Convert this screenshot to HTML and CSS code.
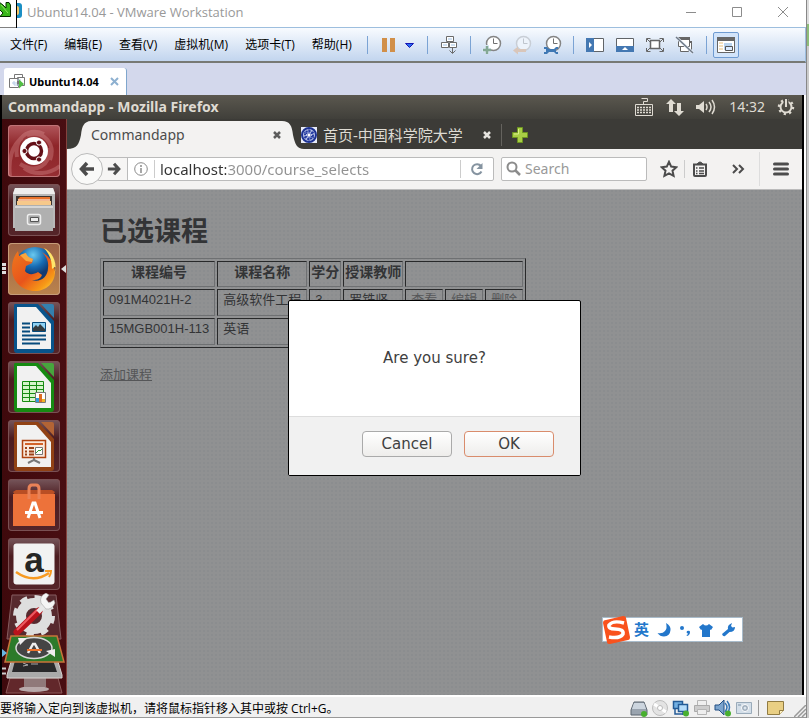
FILE: index.html
```html
<!DOCTYPE html>
<html lang="zh-CN">
<head>
<meta charset="utf-8">
<title>Ubuntu14.04 - VMware Workstation</title>
<link rel="stylesheet" href="styles.css">
</head>
<body>
<div class="window">
  <header class="titlebar">
    <svg class="app-icon" width="24" height="28" viewBox="0 0 24 28" aria-hidden="true">
      <rect x="13" y="3" width="9" height="15" rx="3" fill="#1b8fc4"/><rect x="15" y="6" width="4" height="9" rx="2" fill="#f3c766"/>
      <path d="M-1-1H16.500V28H-1z" fill="#fff" stroke="#000"/>
      <path d="M-1 2L3 5L6 8V2.500H9L10.500 5V16.500H0L3 13L-1 9z" fill="#3ab71b" stroke="#062c00"/><path d="M1 5L8 13" stroke="#8be35a"/>
    </svg>
    <h1 class="window-title">Ubuntu14.04 - VMware Workstation</h1>
    <div class="window-controls">
      <button type="button" aria-label="最小化"><svg width="12" height="12" viewBox="0 0 12 12"><path d="M1 6.500H11" stroke="#8c8c8c"/></svg></button>
      <button type="button" aria-label="最大化"><svg width="12" height="12" viewBox="0 0 12 12"><path d="M1.500 1.500H10.500V10.500H1.500z" fill="none" stroke="#8c8c8c"/></svg></button>
      <button type="button" aria-label="关闭"><svg width="12" height="12" viewBox="0 0 12 12"><path d="M1 1L11 11M11 1L1 11" stroke="#8c8c8c"/></svg></button>
    </div>
  </header>

  <div class="menubar">
    <nav class="menus">
      <button type="button">文件(F)</button><button type="button">编辑(E)</button><button type="button">查看(V)</button><button type="button">虚拟机(M)</button><button type="button">选项卡(T)</button><button type="button">帮助(H)</button>
    </nav>
    <span class="sep"></span>
    <button type="button" class="pause" aria-label="暂停"><svg width="34" height="16" viewBox="381 36 34 16"><path d="M382 37h5v14h-5zM390 37h5v14h-5z" fill="#d18f49"/><path d="M405.500 42.500h8l-4 4z" fill="#2a6cf0" stroke="#1515b5"/></svg></button>
    <span class="sep"></span>
    <button type="button" class="tool" aria-label="发送按键"><svg width="20" height="20" viewBox="438 34 20 20" fill="#fff" stroke="#6b6b6b"><path d="M445.500 35.500h7v5h-7zM440.500 41.500h7v5h-7zM448.500 41.500h7v5h-7z"/><path d="M447 38h4M442 44h4M450 44h4" stroke="#9dc0e4"/><path d="M451.500 47v5M448.500 49.500l3 3 3-3" fill="none"/></svg></button>
    <span class="sep"></span>
    <button type="button" class="tool" aria-label="拍摄快照"><svg width="20" height="20" viewBox="481 34 20 20"><circle cx="492.500" cy="42.500" r="7" fill="#fff" stroke="#858585" stroke-width="1.500"/><path d="M492.500 37.500v5h4" fill="none" stroke="#707070"/><path d="M481 49h9M486 44v9" stroke="#dce8f7" stroke-width="4"/><path d="M482 49h8M486 45v8" stroke="#83a894" stroke-width="2.500"/></svg></button>
    <button type="button" class="tool" aria-label="恢复快照"><svg width="20" height="20" viewBox="511 34 20 20"><circle cx="522.500" cy="42.500" r="7" fill="#edf3fb" stroke="#c8ced6" stroke-width="1.500"/><path d="M522.500 37.500v5h4" fill="none" stroke="#bfc5cd"/><path d="M512 49.500l5-4v2.500h8v3h-8v2.500z" fill="#d9c6ba"/></svg></button>
    <button type="button" class="tool" aria-label="管理快照"><svg width="20" height="20" viewBox="541 34 20 20"><circle cx="552.500" cy="42.500" r="7" fill="#fff" stroke="#858585" stroke-width="1.500"/><path d="M552.500 37.500v5h4" fill="none" stroke="#707070"/><path d="M543 46h3l2 2h5l2-2h2v2h-2v3h2v2h-2l-2-2h-5l-2 2h-3v-2h2v-3h-2z" fill="#3f78b4"/></svg></button>
    <span class="sep"></span>
    <button type="button" class="tool" aria-label="显示库"><svg width="20" height="20" viewBox="584 34 20 20"><path d="M585.500 37.500h17v13h-17z" fill="#fff" stroke="#606468"/><path d="M585 37h8v14h-8z" fill="#4478b2"/><path d="M588 41v6l3-3z" fill="#fff"/></svg></button>
    <button type="button" class="tool" aria-label="缩略图栏"><svg width="20" height="20" viewBox="614 34 20 20"><path d="M615.500 37.500h17v13h-17z" fill="#fff" stroke="#606468"/><path d="M615 45h18v6h-18z" fill="#4478b2"/><path d="M621 49h6l-3-3z" fill="#fff"/></svg></button>
    <button type="button" class="tool" aria-label="全屏"><svg width="20" height="20" viewBox="644 34 20 20" fill="none" stroke="#666"><path d="M649.500 39.500h9v8h-9z" fill="#fff" stroke-width="1.500"/><path d="M645.500 41v-3.500h4M658.500 37.500h4V41M645.500 47v3.500h4M658.500 50.500h4V47M646 38l3 3M662 38l-3 3M646 50l3-3M662 50l-3-3"/></svg></button>
    <button type="button" class="tool" aria-label="Unity 模式"><svg width="20" height="20" viewBox="674 34 20 20" fill="#fff" stroke="#666"><path d="M684.500 40.500h6v8h-6z"/><path d="M684 41h7" stroke-width="2"/><path d="M679.500 45.500h8v5h-8z"/><path d="M677.500 36.500h11v9h-11z"/><path d="M677 37.500h12" stroke-width="3"/><path d="M675 36l17 16" stroke="#e6effa" stroke-width="3"/><path d="M675 36l17 16" stroke="#707a86" stroke-width="1.500"/></svg></button>
    <span class="sep"></span>
    <button type="button" class="tool active" aria-label="控制台视图"><svg width="20" height="18" viewBox="717 35 20 18"><path d="M718.500 37.500h17v14h-17z" fill="#fff" stroke="#666"/><path d="M718 36h18v4h-18z" fill="#666"/><path d="M720 42h4M720 45h4M720 48h4" stroke="#e8c07a"/><path d="M725 42h8v7h-8z" fill="#bad4ef"/><path d="M726.500 45.500h7v4h-7z" fill="#d9eaff" stroke="#555"/></svg></button>
  </div>

  <div class="vmtabs">
    <div class="vmtab">
      <svg width="17" height="17" viewBox="9 74 17 17" fill="#fff" stroke="#777"><path d="M14.500 75.500h8v8h-8z"/><path d="M17.500 78.500h7v8h-7zM9.500 79.500h9v9h-9z"/><path d="M12 84h5M14 82v4h6M17 81h4" stroke="#b5cbe6" fill="none"/><path d="M19 80.500v9l5-4.500z" fill="#53bf45" stroke="none"/></svg>
      <span class="vmtab-name">Ubuntu14.04</span>
      <button type="button" aria-label="关闭标签"><svg width="9" height="9" viewBox="0 0 9 9"><path d="M1 1L8 8M8 1L1 8" stroke="#8db0d0" stroke-width="2"/></svg></button>
    </div>
  </div>

  <div class="vm">
    <div class="panel">
      <span class="panel-title">Commandapp - Mozilla Firefox</span>
      <div class="indicators">
        <svg width="20" height="20" viewBox="632 97 20 20" fill="none" stroke="#dfdbd2"><path d="M633.500 104.500h17v11h-17z"/><path d="M641.500 104v-2.500h4v-3h-6" /><path d="M635 107.500h14M635 110h14M635 112.500h14" stroke-dasharray="2 1" stroke-width="1.500"/></svg>
        <svg width="18" height="18" viewBox="666 98 18 18" fill="#dfdbd2"><path d="M671 99l5 5h-3v8h-4v-8h-3zM679 116l-5-5h3v-8h4v8h3z"/></svg>
        <svg width="21" height="18" viewBox="697 98 21 18" fill="none" stroke="#dfdbd2" stroke-width="1.500"><path d="M697 105h3l5-4v12l-5-4h-3z" fill="#dfdbd2" stroke="none"/><path d="M707 104q2 3 0 6M710 102q4 5 0 10M713 100q5 7 0 14"/></svg>
        <time>14:32</time>
        <svg width="18" height="18" viewBox="777 98 18 18" fill="none" stroke="#dfdbd2"><circle cx="786" cy="107" r="5.500" stroke-width="2"/><circle cx="786" cy="107" r="7" stroke-width="2.500" stroke-dasharray="2.200 3.300"/><path d="M786 97v10" stroke="#504e48" stroke-width="5"/><path d="M786 99v8" stroke-width="2"/></svg>
      </div>
    </div>

    <div class="desktop">
      <aside class="launcher">
        <button type="button" class="tile dash" aria-label="搜索"><svg width="52" height="52" viewBox="8 125 52 52"><path d="M17 157C14 138 28 127 44 134M27 135C44 130 56 144 50 160M50 148C50 166 36 174 20 164M10 176C8 160 12 145 22 138M24 168C34 176 50 174 60 166" fill="none" stroke="#e9a6a6" stroke-opacity=".3" stroke-width="4"/><circle cx="34" cy="151" r="14" fill="#fff"/><circle cx="34" cy="151" r="7.500" fill="none" stroke="#641018" stroke-width="3.500"/><g fill="#641018" stroke="#fff"><circle cx="24.500" cy="151" r="2.600"/><circle cx="39" cy="142.500" r="2.600"/><circle cx="39" cy="159.500" r="2.600"/></g></svg></button>
        <button type="button" class="tile" aria-label="文件"><svg width="52" height="52" viewBox="8 184 52 52"><path d="M15 188h38l2 5v35H13v-35z" fill="#b8b8b8"/><path d="M15 188h38l2 6H13z" fill="#eee"/><path d="M16 196h36v9H16z" fill="#3a3330"/><path d="M18 199l2-2h30v8H18z" fill="#e8722b"/><path d="M17 201h34v4H17z" fill="#f7c98b"/><path d="M18 200h32" stroke="#fff"/><path d="M15 205h38v26H15z" fill="#b0b0b0"/><path d="M15 206h38v2H15z" fill="#d6d6d6"/><rect x="27.500" y="214.500" width="13" height="10" rx="2" fill="#aaa" stroke="#eee" stroke-width="1.500"/><path d="M30.500 217.500h8v4h-8z" fill="#eee" stroke="#555"/></svg></button>
        <button type="button" class="tile firefox running" aria-label="Firefox"><svg width="52" height="52" viewBox="8 243 52 52"><defs><radialGradient id="globe" cx=".45" cy=".2"><stop stop-color="#69c9ef"/><stop offset=".6" stop-color="#166ab2"/><stop offset="1" stop-color="#123a70"/></radialGradient><linearGradient id="fox" x2="1" y2="1"><stop stop-color="#ee781d"/><stop offset=".5" stop-color="#e8541b"/><stop offset=".8" stop-color="#f79a17"/><stop offset="1" stop-color="#ffe14a"/></linearGradient></defs><circle cx="35" cy="267" r="20" fill="url(#globe)"/><path d="M35 291c-13 0-23-10-23-22c0-8 2-13 6-18l1 5l6-3c1 4 3 5 8 6l-1 4l-6 3l-1 5c3 4 8 4 13 1l4 3c-2 5-7 5-10 5c8 3 16-3 16-12c1-7-2-12-6-16c9 6 13 13 13 20c0 11-9 19-20 19z" fill="url(#fox)"/><path d="M44 248c10 5 14 17 10 27l2-9l-4 3c0-8-2-14-8-21z" fill="#ffe56a"/><path d="M20 255l6-2q1 4 7 6l-1 3l-6-1z" fill="#f9a63e"/></svg></button>
        <button type="button" class="tile" aria-label="Writer"><svg width="52" height="52" viewBox="8 302 52 52"><path d="M15 304h23l16 17v29q0 3-3 3H17q-3 0-3-3v-44q0-2 1-2z" fill="#08548c"/><path d="M41 304h11q2 0 2 2v12z" fill="#347fae"/><path d="M17 307h19l15 17v25H17z" fill="#f1f1f1"/><path d="M22 323.500h8M22 327.500h8M22 331.500h8M22 335.500h24M22 339.500h24M22 343.500h18" stroke="#064b7d" stroke-width="2"/><path d="M32.500 322.500h13v9h-13z" fill="#8ed2f4" stroke="#064b7d"/><path d="M33 331v-3l3-3 2 2 2-3 5 5v2z" fill="#353c40"/></svg></button>
        <button type="button" class="tile" aria-label="Calc"><svg width="52" height="52" viewBox="8 361 52 52"><path d="M15 363h23l16 17v29q0 3-3 3H17q-3 0-3-3v-44q0-2 1-2z" fill="#168b12"/><path d="M41 363h11q2 0 2 2v12z" fill="#47a53d"/><path d="M17 366h19l15 17v25H17z" fill="#f1f1f1"/><path d="M22.500 381.500h21v20h-21zM22 385.500h22M22 389.500h22M22 393.500h22M22 397.500h22M29.500 381v21M36.500 381v21" fill="#d6f5cb" stroke="#168b12"/><path d="M35.500 392.500h10v10h-10z" fill="#fff" stroke="#777"/><path d="M36 398h3v4h-3z" fill="#2e9cdf"/><path d="M39 394h3v8h-3z" fill="#de6c23"/><path d="M42 399h3v3h-3z" fill="#eeb325"/></svg></button>
        <button type="button" class="tile" aria-label="Impress"><svg width="52" height="52" viewBox="8 420 52 52"><path d="M15 422h23l16 17v29q0 3-3 3H17q-3 0-3-3v-44q0-2 1-2z" fill="#914215"/><path d="M41 422h11q2 0 2 2v12z" fill="#b36435"/><path d="M17 425h19l15 17v25H17z" fill="#f1f1f1"/><path d="M22.500 440.500h23v17h-23z" fill="#fae8db" stroke="#af4310" stroke-width="1.500"/><path d="M25 444h18" stroke="#d2622a" stroke-width="2"/><path d="M25 448h2M25 451.500h2M25 454.500h2M29 448h5M29 451.500h5M29 454.500h5" stroke="#9c4218" stroke-width="2"/><path d="M35.500 447.500h7v7h-7z" fill="#fff" stroke="#777"/><path d="M36 453l3-3 1 1 2-2" fill="none" stroke="#339d33"/><path d="M34 458v2l-6 3M34 460l6 3" fill="none" stroke="#777" stroke-width="2"/></svg></button>
        <button type="button" class="tile" aria-label="软件中心"><svg width="52" height="52" viewBox="8 479 52 52"><path d="M13 492l3-2h36l3 2-2 3H15z" fill="#b94e24"/><path d="M13 494h42v32H13z" fill="#ed723a"/><path d="M29 499v-10q0-4 3-4h4q3 0 3 4v10" fill="none" stroke="#e98257" stroke-width="3"/><path d="M28 518l5-15h2l5 15" fill="none" stroke="#fff" stroke-width="3"/><path d="M25 512.500h18" stroke="#fff" stroke-width="3"/></svg></button>
        <button type="button" class="tile" aria-label="Amazon"><svg width="52" height="52" viewBox="8 538 52 52"><rect x="13.500" y="543.500" width="41" height="41" rx="3" fill="#f2f2f2"/><text class="amazon-a" x="34" y="572" text-anchor="middle">a</text><path d="M16 572q17 12 33 1" fill="none" stroke="#f79a22" stroke-width="2.500"/><path d="M45 571h6q0 3-2 6" fill="none" stroke="#f79a22" stroke-width="2"/></svg></button>
        <div class="stack"><svg width="64" height="102" viewBox="2 593 64 102">
          <path d="M12 595h44l5 44H7z" fill="#572a2e" stroke="#855d60"/>
          <circle cx="34" cy="616" r="13" fill="none" stroke="#dedede" stroke-width="10"/><circle cx="34" cy="616" r="19" fill="none" stroke="#dedede" stroke-width="4" stroke-dasharray="7.500 7.420"/>
          <path d="M17 632L39 611" stroke="#b9121b" stroke-width="7" stroke-linecap="round"/><path d="M17 630L37 610" stroke="#ed5960" stroke-width="2"/><path d="M38 612l9-9" stroke="#e8e8e8" stroke-width="5"/><path d="M41 603q-2-7 5-10l3 2-3 4 3 4 5-3 1 3q-3 7-9 6z" fill="#f5f5f5" stroke="#999" stroke-width=".5"/>
          <path d="M10 678h48l4 15H6z" fill="#62282b" stroke="#8c5959"/><ellipse cx="34" cy="689" rx="15" ry="3" fill="#b8a9aa"/><path d="M24 678h22v9H24z" fill="#90797a"/>
          <path d="M13 655h43l6 20v3H7v-3z" fill="#aaa" stroke="#d8d4d2"/><path d="M16 657h36l5 15H12z" fill="#29292b"/><path d="M23 663l5 2-5 1M31 664h7" fill="none" stroke="#aaa"/>
          <path d="M11 636h46l7 26H5z" fill="#2c7a2a" stroke="#c9743a" stroke-width="1.500"/><ellipse cx="34" cy="648" rx="18" ry="10.500" fill="#454545" stroke="#d8d8d8" stroke-width="1.500"/><path d="M18 638h9l-7 7zM55 649l-9 2 9 6z" fill="#eee"/><path d="M28 653l5-9h2l5 9" fill="none" stroke="#eee" stroke-width="2.500"/><path d="M27 650h15" stroke="#ed722a" stroke-width="2"/>
          <path d="M2 649l5 4-5 4z" fill="#68b7e3"/><path d="M2 668.500h4M2 673.500h4" stroke="#ccc" stroke-width="2"/>
        </svg></div>
      </aside>

      <main class="browser">
        <div class="tabstrip">
          <div class="tab current">
            <svg class="cap" width="24" height="28" viewBox="67 121 24 28"><path d="M67 149C77 149 79 144 81 135C82 126 84 121 92 121V149z"/></svg>
            <div class="tab-face"><span>Commandapp</span><button type="button" aria-label="关闭标签页"><svg width="8" height="8" viewBox="0 0 8 8"><path d="M1 1L7 7M7 1L1 7" stroke="#5c5c5c" stroke-width="2.500"/></svg></button></div>
            <svg class="cap" width="22" height="28" viewBox="282 121 22 28"><path d="M282 121C290 121 292 126 293 135C295 144 297 149 304 149H282z"/></svg>
          </div>
          <div class="tab other">
            <svg width="16" height="16" viewBox="0 0 16 16"><path d="M0 0h16v16H0z" fill="#e8ebf8"/><circle cx="8" cy="8" r="7" fill="#b9c3e7" stroke="#1d3293" stroke-width="2"/><circle cx="8" cy="8" r="4" fill="none" stroke="#2339a0" stroke-width="2" stroke-dasharray="2 1"/><path d="M8 2v12M3 5l10 6M13 5L3 11" stroke="#2339a0"/><circle cx="8" cy="8" r="1.500" fill="#fff"/></svg>
            <span>首页-中国科学院大学</span>
            <button type="button" aria-label="关闭标签页"><svg width="8" height="8" viewBox="0 0 8 8"><path d="M1 1L7 7M7 1L1 7" stroke="#e6e4df" stroke-width="2.500"/></svg></button>
          </div>
          <button type="button" class="newtab" aria-label="新标签页"><svg width="16" height="16" viewBox="0 0 16 16"><path d="M5.500.5h5v5h5v5h-5v5h-5v-5h-5v-5h5z" fill="#a9cf45" stroke="#6e9621"/><path d="M6.500 2v5H2M9 2" fill="none" stroke="#d9f08a"/></svg></button>
        </div>

        <div class="navbar">
          <button type="button" class="back" aria-label="后退"><svg width="16" height="16" viewBox="0 0 16 16"><path d="M8 2L2.500 8L8 14M3 8H15" fill="none" stroke="#4c4c4c" stroke-width="3.500"/></svg></button>
          <div class="address">
            <button type="button" class="forward" aria-label="前进"><svg width="14" height="14" viewBox="0 0 16 16"><path d="M8 2L13.500 8L8 14M13 8H1" fill="none" stroke="#4c4c4c" stroke-width="3.500"/></svg></button>
            <svg class="info" width="14" height="14" viewBox="0 0 14 14" fill="none" stroke="#8a8a8a"><circle cx="7" cy="7" r="6.300"/><path d="M7 3v2M7 6v5" stroke-width="1.500"/></svg>
            <span class="line"></span>
            <input class="url" type="text" value="localhost:3000/course_selects" aria-label="地址">
            <span class="line"></span>
            <button type="button" class="reload" aria-label="刷新"><svg width="14" height="14" viewBox="0 0 14 14"><path d="M11.500 9.500A5 5 0 1 1 11 4" fill="none" stroke="#8593a0" stroke-width="2"/><path d="M12.500 1v6h-6z" fill="#8593a0"/></svg></button>
          </div>
          <label class="search"><svg width="16" height="16" viewBox="0 0 16 16"><circle cx="6" cy="6" r="4.500" fill="none" stroke="#8c8c8c" stroke-width="2"/><path d="M9.500 9.500L14 14" stroke="#8c8c8c" stroke-width="2.500"/></svg><input type="search" placeholder="Search" aria-label="Search"></label>
          <button type="button" class="star" aria-label="收藏"><svg width="18" height="18" viewBox="0 0 18 18"><path d="M9 1.800l2.200 4.800 5.200.6-3.900 3.500 1.100 5.200L9 13.300l-4.600 2.600 1.100-5.200L1.600 7.200l5.200-.6z" fill="none" stroke="#4c4c4c" stroke-width="2"/></svg></button>
          <span class="line"></span>
          <button type="button" class="clip" aria-label="书签"><svg width="16" height="16" viewBox="0 0 16 16"><path d="M2 3.500h12V14q0 1-1 1H3q-1 0-1-1z" fill="none" stroke="#4c4c4c" stroke-width="2"/><path d="M5 3q3-4 6 0z" fill="#4c4c4c" stroke="#4c4c4c"/><path d="M4 7h1.500M7 7h5M4 10h1.500M7 10h5M4 12.500h1.500M7 12.500h5" stroke="#4c4c4c" stroke-width="1.500"/></svg></button>
          <button type="button" class="more" aria-label="更多工具"><svg width="14" height="12" viewBox="0 0 14 12"><path d="M2 2l4 4-4 4M8 2l4 4-4 4" fill="none" stroke="#4c4c4c" stroke-width="2"/></svg></button>
          <span class="line tall"></span>
          <button type="button" class="menu" aria-label="菜单"><svg width="16" height="14" viewBox="0 0 16 14"><path d="M1.500 2h13M1.500 7h13M1.500 12h13" stroke="#4c4c4c" stroke-width="3" stroke-linecap="round"/></svg></button>
        </div>

        <section class="page">
          <h2>已选课程</h2>
          <table>
            <thead><tr><th>课程编号</th><th>课程名称</th><th>学分</th><th>授课教师</th><th colspan="3"></th></tr></thead>
            <tbody>
              <tr><td>091M4021H-2</td><td>高级软件工程</td><td>3</td><td>罗铁坚</td><td><a href="#">查看</a></td><td><a href="#">编辑</a></td><td><a href="#">删除</a></td></tr>
              <tr><td>15MGB001H-113</td><td>英语</td><td></td><td></td><td></td><td></td><td></td></tr>
            </tbody>
          </table>
          <a class="add" href="#">添加课程</a>

          <div class="overlay">
            <div class="dialog" role="alertdialog" aria-labelledby="question">
              <p id="question">Are you sure?</p>
              <div class="actions"><button type="button">Cancel</button><button type="button" class="ok">OK</button></div>
            </div>
          </div>

          <div class="ime">
            <svg class="ime-logo" width="28" height="28" viewBox="603 614 28 28"><path d="M607 618l17-4q3 0 3 2l4 19q0 3-2 3l-18 4q-3 0-3-2l-4-19q0-3 3-3z" fill="#f9521d"/><path d="M625 621q-11-3-15 2q-1 4 6 4q9 0 8 5q-3 5-14 3" fill="none" stroke="#fff" stroke-width="3.500"/></svg>
            <b>英</b>
            <svg width="14" height="14" viewBox="0 0 14 14"><path d="M9 0q5 3 4.500 7q-.5 6-6.500 6.500q-4 0-6.500-3.500q5 1 7.500-2q2.500-3 1-8z" fill="#2377cb"/></svg>
            <svg width="12" height="14" viewBox="0 0 12 14"><circle cx="3" cy="5" r="2" fill="#2377cb"/><path d="M8 8q3-1 3 1q0 3-3 4l-.5-1q1.500-.5 1.500-1.500q-2 0-1-2.500z" fill="#2377cb"/></svg>
            <svg width="14" height="14" viewBox="0 0 14 14"><path d="M4 1q3 3 6 0l4 3-2 3-1-.5V14H3V6.500L2 7 0 4z" fill="#2377cb"/></svg>
            <svg width="14" height="14" viewBox="0 0 14 14"><path d="M1 11l6-5q-1-4 4-6l-1 3 1.500 1.500L14 4q0 5-5.500 5L4 13q-2 1-3-2z" fill="#2377cb"/></svg>
          </div>
        </section>
      </main>
    </div>
  </div>

  <footer class="statusbar">
    <span class="hint">要将输入定向到该虚拟机，请将鼠标指针移入其中或按 Ctrl+G。</span>
    <div class="devices">
      <svg width="18" height="18" viewBox="630 699 18 18"><path d="M634 702h10l3 8v5h-16v-5z" fill="#9aa4af" stroke="#5c6670"/><path d="M634 703h10l2 6h-14z" fill="#ccd5de"/><circle cx="644" cy="714" r="3" fill="#48af2f"/></svg>
      <svg width="18" height="18" viewBox="0 0 18 18"><circle cx="9" cy="9" r="7.500" fill="#e3e3e3" stroke="#bdbdbd"/><path d="M9 9L3 5M9 9l6 4" stroke="#fff" stroke-width="3"/><circle cx="9" cy="9" r="2.500" fill="#fff" stroke="#bbb"/></svg>
      <svg width="18" height="18" viewBox="0 0 18 18"><path d="M1.500 2.500h9v7h-9z" fill="#72b0e3" stroke="#245b96" stroke-width="1.500"/><path d="M6.500 5.500h9v7h-9z" fill="#b5dcfa" stroke="#245b96" stroke-width="1.500"/><path d="M3 10v5h8M11 13v3" fill="none" stroke="#245b96" stroke-width="1.500"/><circle cx="14" cy="14.500" r="3" fill="#48af2f"/></svg>
      <svg width="18" height="18" viewBox="0 0 18 18"><path d="M4.500 1.500h9v5h-9z" fill="#eee" stroke="#b5b5b5"/><path d="M1.500 6.500h15v6h-15z" fill="#ccc" stroke="#aaa"/><path d="M4.500 10.500h9v5h-9z" fill="#eee" stroke="#b5b5b5"/></svg>
      <svg width="18" height="18" viewBox="0 0 18 18"><path d="M1 6h4l5-5v15l-5-5H1z" fill="#7ba4cd" stroke="#224e83"/><path d="M11 4q4 4 0 9M13 2q5 6 0 13" fill="none" stroke="#3676b5" stroke-width="1.500"/><circle cx="14" cy="14.500" r="3" fill="#48af2f"/></svg>
      <svg width="18" height="18" viewBox="0 0 18 18"><path d="M1.500 3.500h15v11h-15z" fill="#d4dfe9" stroke="#9aabba"/><circle cx="10" cy="9" r="3.500" fill="#9cabba" stroke="#fff"/><circle cx="10" cy="9" r="1.500" fill="#dce6ee"/><path d="M3 6h3" stroke="#7d93a8"/></svg>
      <span class="divider"></span>
      <svg width="18" height="18" viewBox="768 699 18 18"><path d="M768.500 701.500h16v9l-4 4h-12z" fill="#e9cf84" stroke="#917c43"/><path d="M780.500 714.500v-4h4" fill="#fff1c2" stroke="#917c43"/></svg>
      <svg class="grip" width="12" height="12" viewBox="0 0 12 12"><path d="M0 12L12 0M4 12L12 4M8 12L12 8" stroke="#999" stroke-width="1.500"/></svg>
    </div>
  </footer>
</div>
<div class="backdrop"></div>
</body>
</html>
```

FILE: styles.css
```css
* { box-sizing: border-box; }

body {
  margin: 0;
  min-height: 100vh;
  display: flex;
  background: #fff;
  font: 12px/18px "Open Sans", "Noto Sans CJK SC", sans-serif;
  color: #000;
}

button {
  padding: 0;
  border: 0;
  background: none;
  font: inherit;
  color: inherit;
}

svg { display: block; flex: none; }

.window {
  flex: 1;
  min-width: 0;
  display: flex;
  flex-direction: column;
}

.backdrop {
  width: 3px;
  border-left: 1px solid #888;
  background: linear-gradient(#ddd 24px, #8ebd79 24px, #8ebd79 46px, #ccc 46px);
}

/* Host window */
.titlebar {
  height: 27px;
  display: flex;
  align-items: center;
}

.app-icon { align-self: flex-start; position: relative; }

.window-title {
  margin: 0 0 3px 3px;
  font-size: 13px;
  font-weight: 400;
  color: #999;
}

.window-controls {
  margin: 0 17px 4px auto;
  display: flex;
  gap: 34px;
}

.menubar {
  height: 36px;
  display: flex;
  align-items: center;
  border: 1px solid #9dbede;
  border-left: 0;
  border-bottom: 2px solid #777974;
  background: linear-gradient(#f8fbff, #c2d5ee);
}

.menus {
  width: 361px;
  padding-left: 10px;
  display: flex;
  gap: 17px;
  white-space: nowrap;
}

.sep {
  width: 1px;
  height: 18px;
  margin: 0 6px;
  background: #7ba3d4;
}

.pause { padding: 0 6px 0 7px; }

.tool {
  width: 30px;
  height: 26px;
  display: flex;
  align-items: center;
  justify-content: center;
}

.tool.active {
  width: 26px;
  border: 1px solid #6f9bd1;
  border-radius: 2px;
  background: #d2e4fa;
}

.vmtabs {
  height: 32px;
  padding: 5px 0 0 4px;
  background: #d3d8ec;
}

.vmtab {
  width: 123px;
  height: 27px;
  padding: 0 7px 0 5px;
  display: flex;
  align-items: center;
  border-right: 1px solid #7fa6cd;
  border-radius: 3px 3px 0 0;
  background: #fff;
}

.vmtab-name {
  margin: 0 auto 0 3px;
  font: bold 11px/18px "Noto Sans", sans-serif;
}

/* Guest screen */
.vm {
  flex: 1;
  margin-right: 2px;
  display: flex;
  flex-direction: column;
  border: solid #000;
  border-width: 0 2px;
  font-family: "Noto Sans", "Noto Sans CJK SC", sans-serif;
}

.panel {
  height: 24px;
  padding: 0 7px 0 6px;
  display: flex;
  align-items: center;
  justify-content: space-between;
  background: linear-gradient(#5b584f, #403f3a);
  color: #dfdbd2;
}

.panel-title { font-size: 14px; font-weight: 700; }

.indicators {
  display: flex;
  align-items: center;
  gap: 12px;
  font-size: 14px;
}

.desktop { flex: 1; display: flex; }

.launcher {
  width: 65px;
  padding: 6px 0 0 6px;
  display: flex;
  flex-direction: column;
  gap: 7px;
  border-right: 1px solid #84423d;
  background: linear-gradient(90deg, #3e090c, #490e12);
}

.tile {
  width: 52px;
  height: 52px;
  position: relative;
  border-radius: 4px;
  background: linear-gradient(#76565b, #4c1c20 35%, #552529);
  box-shadow: inset 0 0 0 1px #7a5053;
}

.tile.dash { background: linear-gradient(#b1575c, #8e2529 40%, #962e33); box-shadow: inset 0 0 0 1px #bf7477; }
.tile.firefox { background: linear-gradient(#9c6245, #ba834d); box-shadow: inset 0 0 0 1px #c69d79; }

.running::before,
.running::after {
  content: "";
  position: absolute;
}

.running::before {
  left: -6px;
  top: 20px;
  width: 4px;
  height: 11px;
  background: repeating-linear-gradient(#ddd 0 3px, transparent 3px 4px);
}

.running::after {
  right: -6px;
  top: 22px;
  border: solid transparent;
  border-width: 4px 5px 4px 0;
  border-right-color: #ddd;
}

.amazon-a { font: bold 35px "Liberation Sans", sans-serif; fill: #252525; }

.stack { margin: -4px 0 0 -6px; }

.browser {
  flex: 1;
  min-width: 0;
  display: flex;
  flex-direction: column;
}

.tabstrip {
  height: 30px;
  padding-top: 2px;
  display: flex;
  background: #3c3b37;
  font-size: 14px;
}

.tab { display: flex; align-items: center; }
.cap { fill: #f3f2f1; }

.tab-face {
  width: 191px;
  height: 28px;
  display: flex;
  align-items: center;
  justify-content: space-between;
  background: #f3f2f1;
  color: #4c4c4c;
}

.current button { margin-right: 1px; }

.other {
  width: 201px;
  height: 22px;
  margin: 3px 0 0 -3px;
  gap: 6px;
  border-right: 1px solid #65635e;
  color: #dedbd3;
  font-size: 15px;
}

.other button { margin: 0 10px 0 auto; }
.newtab { margin-left: 10px; }

.navbar {
  height: 41px;
  padding: 0 13px 0 4px;
  display: flex;
  align-items: center;
  background: #f3f2f1;
  border-bottom: 1px solid #bbb;
  color: #4c4c4c;
  font-size: 14px;
}

.back {
  width: 32px;
  height: 32px;
  display: grid;
  place-items: center;
  position: relative;
  border: 1px solid #bbb;
  border-radius: 50%;
  background: #f9f9f8;
}

.address {
  flex: 1;
  min-width: 0;
  height: 24px;
  margin-left: -5px;
  display: flex;
  align-items: center;
  border: 1px solid #bbb;
  border-radius: 0 2px 2px 0;
  background: #fff;
}

.forward {
  align-self: stretch;
  padding: 0 6px 0 8px;
  border-right: 1px solid #bbb;
  background: #f6f5f4;
}

.info { margin: 0 6px; }
.line { width: 1px; height: 18px; background: #ccc; }
.line.tall { height: 34px; background: #ddd; }

input {
  min-width: 0;
  padding: 0;
  border: 0;
  outline: 0;
  background: none;
  font: inherit;
}

.url {
  flex: 1;
  margin-left: 5px;
  font-size: 15px;
  color: transparent;
  background: linear-gradient(90deg, #333 66px, #929292 66px);
  -webkit-background-clip: text;
  background-clip: text;
}

.reload { margin: 0 9px; }

.search {
  width: 146px;
  height: 24px;
  margin: 0 13px 0 7px;
  padding: 0 4px;
  display: flex;
  align-items: center;
  gap: 3px;
  border: 1px solid #bbb;
  border-radius: 2px;
  background: #fff;
}

.search input { flex: 1; }
.search input::placeholder { color: #999; opacity: 1; }
.star { margin-right: 6px; }
.clip { margin-left: 7px; }
.more { margin: 0 14px 0 23px; }
.menu { margin-left: 13px; }

/* Web page inside the guest browser */
.page {
  flex: 1;
  position: relative;
  padding: 27px 33px;
  background: radial-gradient(circle at 1px 1px, #8b8d8f 1px, transparent 1px) 0 0 / 4px 4px, #909192;
  color: #333436;
  font: 13px/18px "Liberation Sans", "Noto Sans CJK SC", sans-serif;
}

.page h2 { margin: 0 0 11px; font-size: 27px; line-height: 30px; }

table {
  border: 1px solid;
  border-color: #6e7072 #28292a #28292a #6e7072;
  border-spacing: 2px;
}

th, td {
  border: 1px solid;
  border-color: #28292a #6e7072 #6e7072 #28292a;
}

th { height: 26px; padding: 1px 1px 5px; font-size: 14px; }
td { height: 27px; padding: 1px 5px 6px; }
td a { color: #555658; text-decoration: none; }

.add { display: inline-block; margin-top: 18px; color: #555658; }

.overlay {
  position: absolute;
  inset: 0;
  padding-top: 110px;
  display: flex;
  align-items: flex-start;
  justify-content: center;
}

.dialog {
  width: 293px;
  overflow: hidden;
  border: 1px solid #000;
  border-radius: 2px;
  background: #fff;
  color: #404040;
  font: 15px/18px "DejaVu Sans", sans-serif;
}

.dialog p { margin: 0; padding: 48px 0 49px; text-align: center; }

.actions {
  padding: 14px 26px 18px;
  display: flex;
  justify-content: flex-end;
  gap: 12px;
  border-top: 1px solid #ddd;
  background: #f1f1f1;
}

.actions button {
  width: 90px;
  height: 26px;
  border: 1px solid #aaa;
  border-radius: 4px;
  background: linear-gradient(#fff, #eeedeb);
}

.actions .ok { border-color: #d98c6c; }

.ime {
  position: absolute;
  right: 59px;
  bottom: 53px;
  height: 25px;
  padding-right: 7px;
  display: flex;
  align-items: center;
  gap: 8px;
  border: 1px solid #a9bccb;
  background: #fff;
}

.ime b { margin-left: -4px; color: #2377cb; font-size: 15px; }
.ime-logo { margin-left: -1px; }

/* Host status bar */
.statusbar {
  height: 23px;
  display: flex;
  align-items: center;
  justify-content: space-between;
  border-top: 2px solid #fff;
  border-bottom: 1px solid #999;
  background: #f0f0f0;
  white-space: nowrap;
}

.hint { margin-top: 4px; }
.devices { display: flex; align-items: center; gap: 3px; padding-top: 2px; }
.divider { width: 1px; height: 16px; margin: 0 5px 0 2px; background: #999; }
.grip { margin: 6px 0 0 6px; }
```
